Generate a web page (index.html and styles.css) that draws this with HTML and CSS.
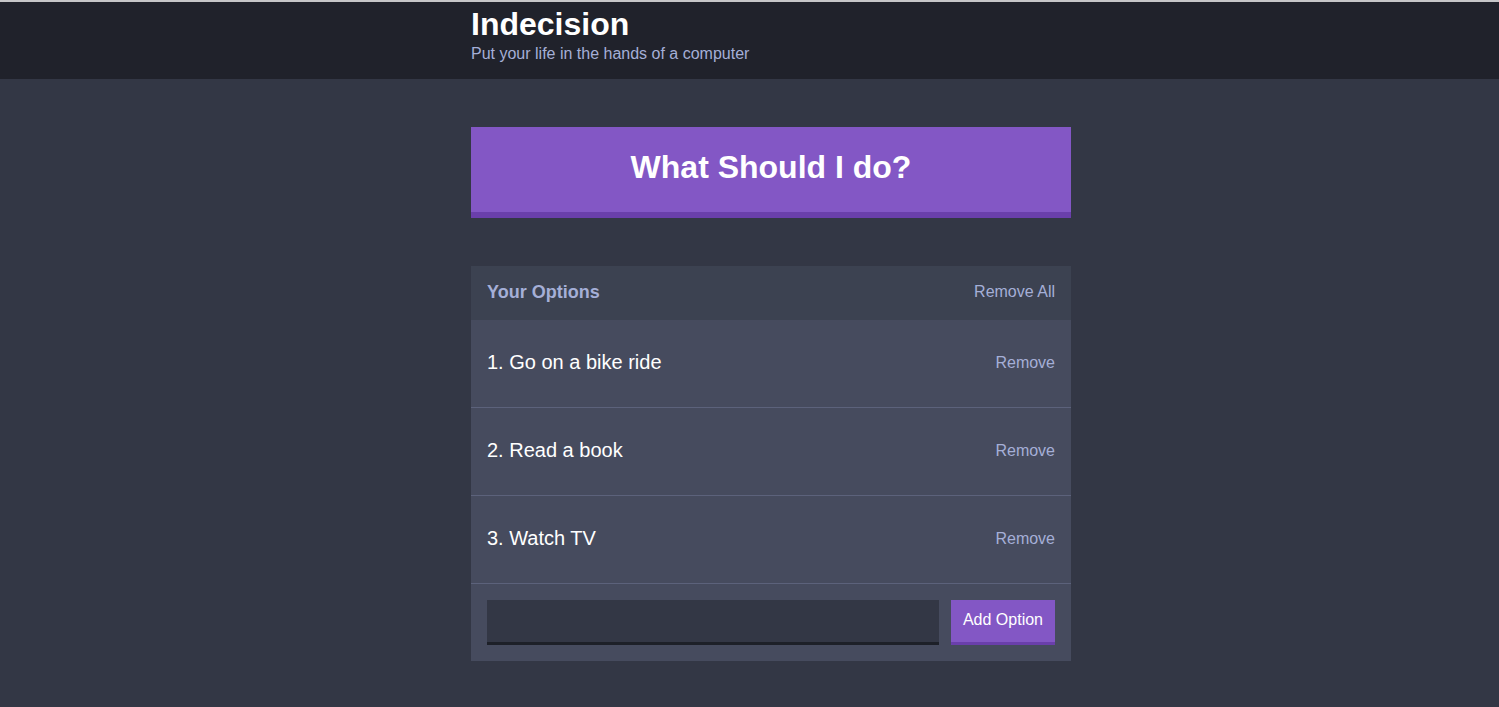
FILE: index.html
```html
<!DOCTYPE html>
<html lang="en">
<head>
<meta charset="utf-8">
<title>Indecision</title>
<link rel="stylesheet" href="styles.css">
</head>
<body>
  <header class="header">
    <div class="container">
      <h1 class="header__title">Indecision</h1>
      <h2 class="header__subtitle">Put your life in the hands of a computer</h2>
    </div>
  </header>
  <main class="container">
    <button class="big-button">What Should I do?</button>
    <section class="widget">
      <div class="widget-header">
        <h3 class="widget-header__title">Your Options</h3>
        <button class="button--link">Remove All</button>
      </div>
      <div class="option">
        <p class="option__text">1. Go on a bike ride</p>
        <button class="button--link">Remove</button>
      </div>
      <div class="option">
        <p class="option__text">2. Read a book</p>
        <button class="button--link">Remove</button>
      </div>
      <div class="option">
        <p class="option__text">3. Watch TV</p>
        <button class="button--link">Remove</button>
      </div>
      <form class="add-option">
        <input class="add-option__input" type="text" name="option">
        <button class="button" type="button">Add Option</button>
      </form>
    </section>
  </main>
</body>
</html>
```
FILE: styles.css
```css
* {
  box-sizing: border-box;
}

html, body {
  margin: 0;
  padding: 0;
}

body {
  background: #333745;
  font-family: "Liberation Sans", Arial, Helvetica, sans-serif;
  font-size: 16px;
  min-height: 707px;
}

button, input {
  font-family: inherit;
  font-size: 16px;
}

.container {
  width: 600px;
  margin-left: calc(50% - 278.5px);
}

.header {
  background: #20222b;
  border-top: 2px solid #c6c6c8;
  color: #ffffff;
  padding: 4px 0 16px;
  margin-bottom: 48px;
}

.header__title {
  font-size: 32px;
  font-weight: bold;
  margin: 0 0 2px;
  line-height: normal;
}

.header__subtitle {
  color: #a5afd7;
  font-size: 16px;
  font-weight: 500;
  margin: 0;
  line-height: normal;
}

.big-button {
  display: block;
  width: 100%;
  background: #8357c5;
  border: none;
  border-bottom: 6px solid #6a3fab;
  color: #ffffff;
  font-size: 32px;
  font-weight: bold;
  padding: 22px 24px 26px;
  margin-bottom: 48px;
  line-height: normal;
  cursor: pointer;
}

.widget {
  background: #464b5e;
  margin-bottom: 48px;
}

.widget-header {
  background: #3c4251;
  color: #a5afd7;
  display: flex;
  justify-content: space-between;
  align-items: center;
  padding: 15px 16px 17px;
  height: 54px;
}

.widget-header__title {
  margin: 0;
  font-size: 18px;
  font-weight: bold;
}

.button--link {
  background: none;
  border: none;
  color: #a5afd7;
  padding: 0;
  cursor: pointer;
}

.option {
  border-bottom: 1px solid #5c627b;
  display: flex;
  justify-content: space-between;
  align-items: center;
  padding: 31px 16px 33px;
}

.option__text {
  color: #ffffff;
  font-size: 20px;
  font-weight: 500;
  margin: 0;
  line-height: 23px;
}

.add-option {
  display: flex;
  padding: 16px;
}

.add-option__input {
  background: #333745;
  border: none;
  border-bottom: 3px solid #1d2028;
  color: #a5afd7;
  flex-grow: 1;
  margin-right: 12px;
  padding: 12px;
  height: 45px;
  outline: none;
}

.button {
  background: #8357c5;
  border: none;
  border-bottom: 3px solid #6a3fab;
  color: #ffffff;
  font-weight: 500;
  padding: 11px 12px 13px;
  height: 45px;
  cursor: pointer;
}
```
